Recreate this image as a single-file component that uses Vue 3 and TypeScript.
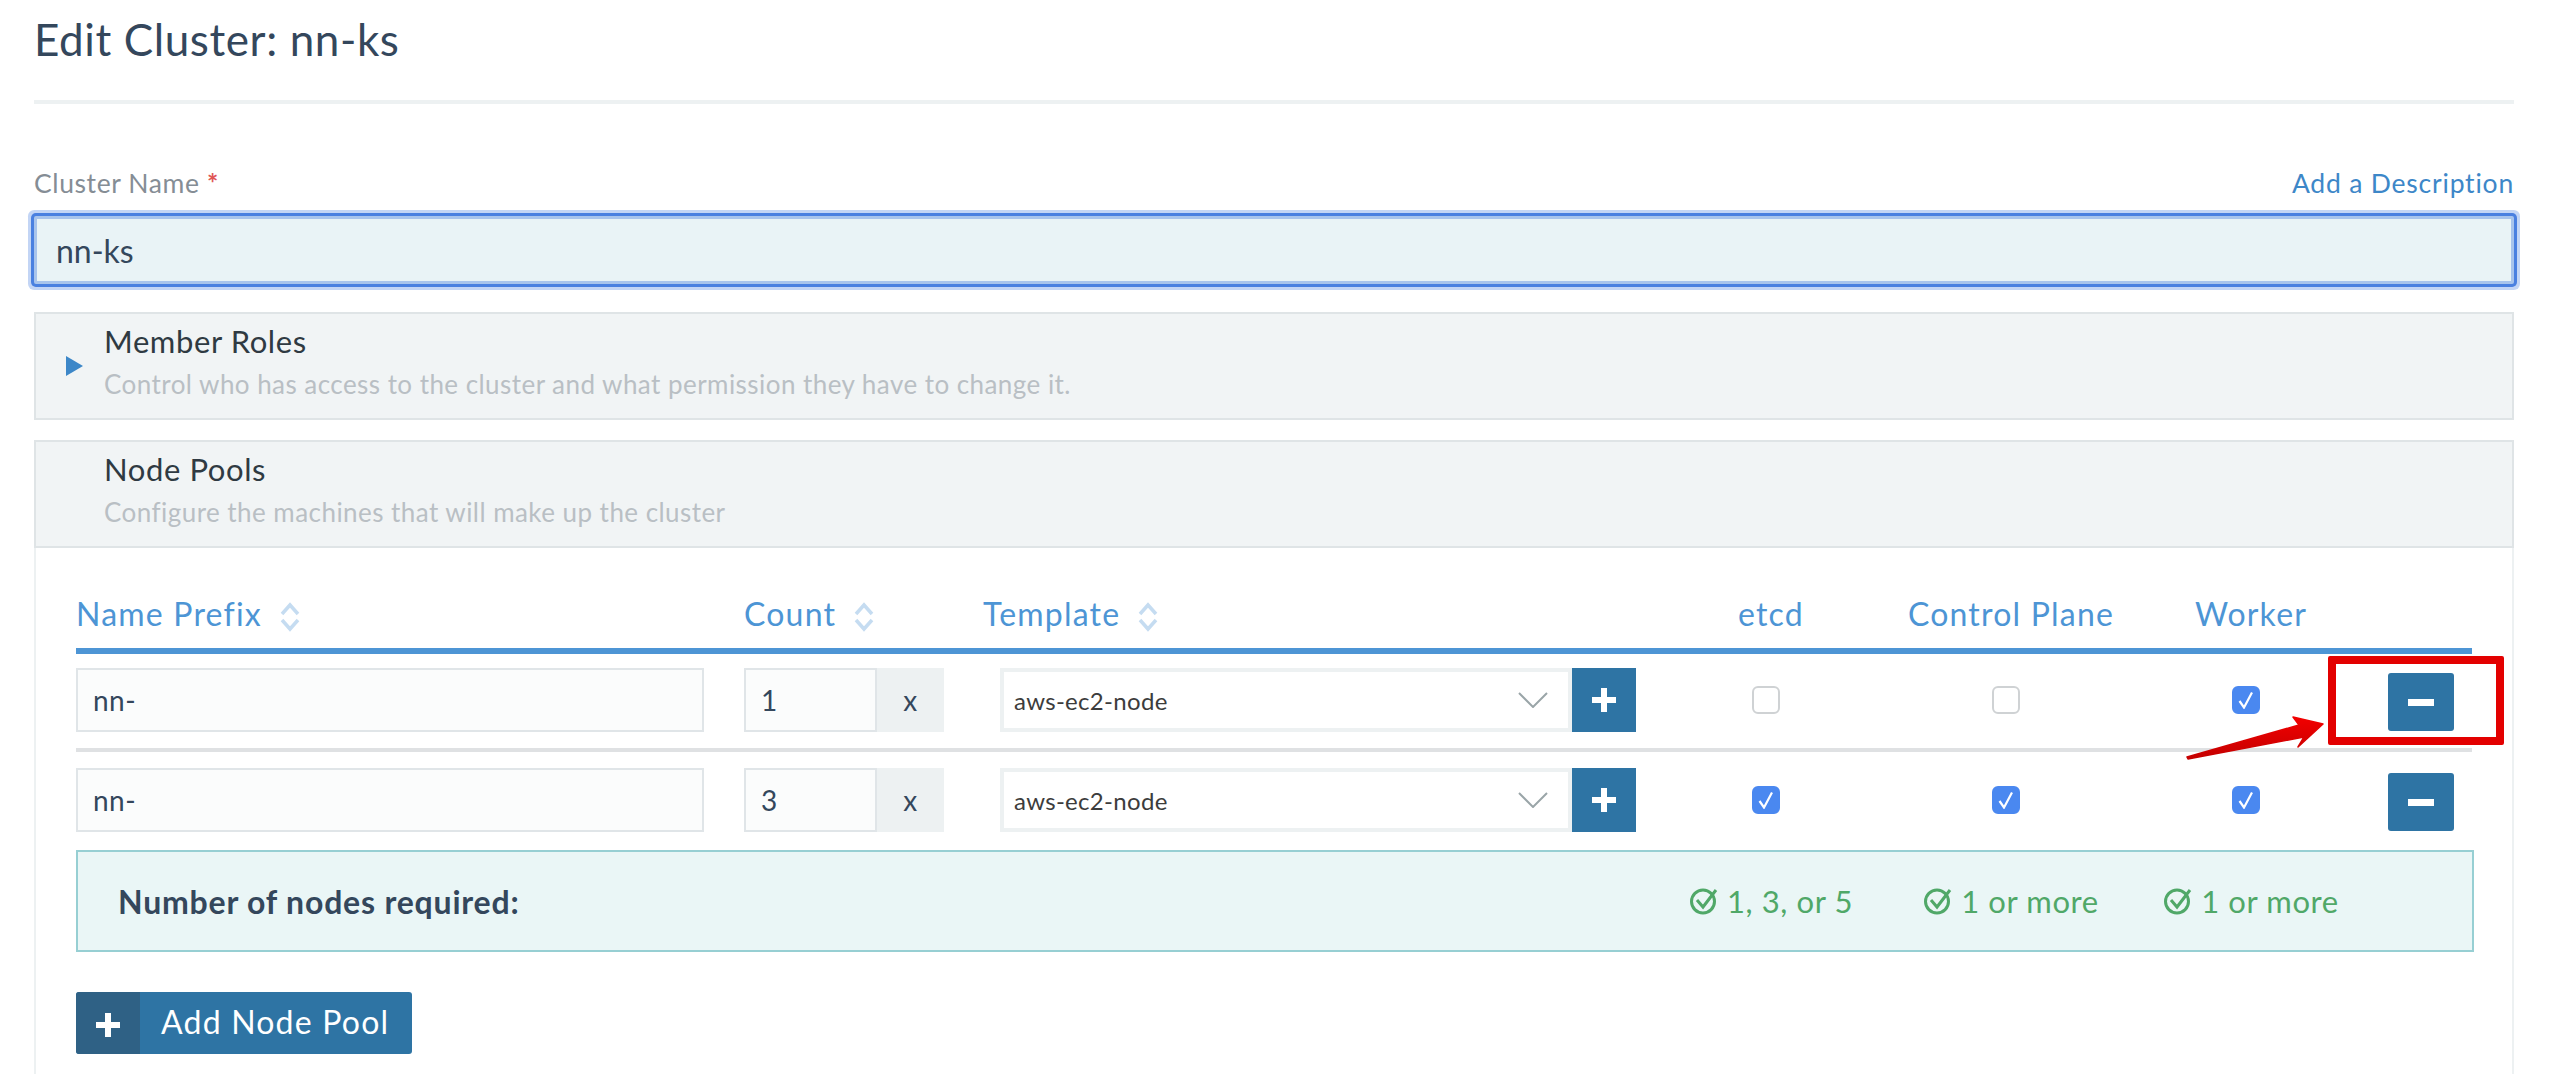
<template>
  <div class="page">
    <h1 class="title">Edit Cluster: nn-ks</h1>
    <div class="label-row">
      <label class="label">Cluster Name <span class="req">*</span></label>
      <a class="link">Add a Description</a>
    </div>
    <input class="name-input" value="nn-ks" />

    <section class="panel closed">
      <svg class="tri" width="17" height="20" viewBox="0 0 17 20"><path d="M0 0L17 10L0 20Z" fill="#3d87c8" /></svg>
      <div class="panel-title">Member Roles</div>
      <div class="panel-sub">Control who has access to the cluster and what permission they have to change it.</div>
    </section>

    <section class="panel">
      <div class="panel-title">Node Pools</div>
      <div class="panel-sub">Configure the machines that will make up the cluster</div>
    </section>

    <div class="body">
      <div class="grid head">
        <div v-for="h in sortHeads" :key="h" class="th">
          {{ h }}
          <svg class="sort" width="20" height="30" viewBox="0 0 20 30" fill="none" stroke="#c5dcf1" stroke-width="3.5">
            <path d="M2 12L10 3L18 12" />
            <path d="M2 18L10 27L18 18" />
          </svg>
        </div>
        <div v-for="h in roleHeads" :key="h" class="th role">{{ h }}</div>
        <div></div>
      </div>

      <div v-for="(row, i) in rows" :key="i" class="grid row" :class="{ first: i === 0 }">
        <input class="text-input name" value="nn-" />
        <div class="count">
          <input class="text-input count-input" :value="row.count" />
          <span class="addon">x</span>
        </div>
        <div class="template">
          <div class="select">
            <span>aws-ec2-node</span>
            <svg width="30" height="16" viewBox="0 0 30 16" fill="none" stroke="#9aa5a8" stroke-width="2"><path d="M1 1L15 15L29 1" /></svg>
          </div>
          <button class="square">
            <svg width="24" height="24" viewBox="0 0 24 24"><path d="M9 0H15V9H24V15H15V24H9V15H0V9H9Z" fill="#fff" /></svg>
          </button>
        </div>
        <div v-for="(on, j) in row.roles" :key="j" class="cell">
          <span class="check" :class="{ on }">
            <svg v-if="on" width="18" height="18" viewBox="0 0 18 18" fill="none" stroke="#fff" stroke-width="2.200"><path d="M2.500 10L7 16.500L15 1.500" /></svg>
          </span>
        </div>
        <div class="cell action">
          <button class="minus"><i></i></button>
        </div>
      </div>

      <div class="required">
        <strong>Number of nodes required:</strong>
        <div v-for="r in required" :key="r.text + r.id" class="req-cell">
          <svg width="30" height="28" viewBox="0 0 30 28" fill="none" stroke="#50a868" stroke-width="3">
            <circle cx="14" cy="14.500" r="11.500" />
            <path d="M8 13L14 20L27 3" />
          </svg>
          {{ r.text }}
        </div>
      </div>

      <button class="add"><span class="add-icon"><svg width="24" height="24" viewBox="0 0 24 24"><path d="M9 0H15V9H24V15H15V24H9V15H0V9H9Z" fill="#fff" /></svg></span><span class="add-text">Add Node Pool</span></button>
    </div>

    <!-- annotation drawn over the screenshot -->
    <div class="mark"></div>
    <svg class="arrow" width="150" height="50" viewBox="0 0 150 50">
      <defs>
        <linearGradient id="arrowFill" x1="0" y1="0" x2="0" y2="1">
          <stop offset="0" stop-color="#f20000" />
          <stop offset="1" stop-color="#c40000" />
        </linearGradient>
      </defs>
      <path d="M1 43L113 11L107 3L137 10L112 33L118 23L2 45Z" fill="url(#arrowFill)" stroke="url(#arrowFill)" stroke-width="1.500" stroke-linejoin="round" />
    </svg>
  </div>
</template>

<script setup lang="ts">
const sortHeads = ["Name Prefix", "Count", "Template"];
const roleHeads = ["etcd", "Control Plane", "Worker"];

const rows = [
  { count: 1, roles: [false, false, true] },
  { count: 3, roles: [true, true, true] },
];

const required = [
  { id: 1, text: "1, 3, or 5" },
  { id: 2, text: "1 or more" },
  { id: 3, text: "1 or more" },
];
</script>

<style>
html,
body {
  background: #fff;
}
</style>

<style scoped>
.page {
  position: relative;
  height: 1074px;
  overflow: hidden;
  box-sizing: border-box;
  padding: 0 48px 0 34px;
  font-family: Lato, "Open Sans", sans-serif;
  font-weight: 300;
  color: #34475c;
  letter-spacing: 0.6px;
}
.title {
  margin: 0;
  height: 100px;
  line-height: 78px;
  font-size: 44px;
  font-weight: 400;
  border-bottom: 4px solid #edf1f2;
}
.label-row {
  display: flex;
  justify-content: space-between;
  align-items: center;
  height: 34px;
  margin-top: 62px;
  font-size: 26.500px;
  font-weight: 400;
}
.label {
  color: #858d95;
}
.req {
  color: #e05555;
  font-weight: 700;
}
.link {
  color: #3d87c8;
  letter-spacing: 0.800px;
}
.name-input {
  display: block;
  box-sizing: border-box;
  width: 100%;
  height: 68px;
  margin-top: 16px;
  padding: 0 19px;
  background: #e9f3f6;
  border: 3px solid #a8c4ec;
  border-radius: 2px;
  box-shadow: 0 0 0 3px #4a80e0, 0 0 0 6px #c3d5f5;
  outline: none;
  font: 400 32px Lato, sans-serif;
  color: #34475c;
}
.panel {
  position: relative;
  box-sizing: border-box;
  height: 108px;
  margin-top: 28px;
  padding: 7px 0 0 68px;
  background: #f1f4f5;
  border: 2px solid #dfe4e6;
}
.panel + .panel {
  margin-top: 20px;
}
.panel-title {
  font-size: 31px;
  font-weight: 400;
  line-height: 40px;
  color: #2f3a42;
}
.panel-sub {
  margin-top: 6px;
  font-size: 26px;
  font-weight: 400;
  line-height: 34px;
  letter-spacing: 0.450px;
  color: #b9bfc4;
}
.tri {
  position: absolute;
  left: 30px;
  top: 42px;
}
.body {
  box-sizing: border-box;
  height: 530px;
  padding: 12px 40px 0;
  border-left: 2px solid #edf1f2;
  border-right: 2px solid #edf1f2;
}
.grid {
  display: grid;
  grid-template-columns: 668px 239px 663px 240px 240px 240px 1fr;
}
.head {
  height: 94px;
  border-bottom: 6px solid #4d95d5;
  box-sizing: border-box;
  padding-top: 33px;
  color: #4d95d5;
  font-size: 32px;
  font-weight: 400;
  letter-spacing: 1.200px;
}
.th {
  display: flex;
  align-items: center;
  gap: 18px;
  height: 40px;
}
.role {
  justify-content: center;
  padding-left: 10px;
}
.sort {
  margin-top: 8px;
}
.row {
  height: 80px;
  padding-top: 16px;
  box-sizing: border-box;
}
.row.first {
  height: 98px;
  padding-top: 14px;
  border-bottom: 4px solid #dfe1e3;
}
.text-input {
  box-sizing: border-box;
  width: 100%;
  height: 64px;
  padding: 0 15px;
  background: #fbfcfc;
  border: 2px solid #e0e5e8;
  outline: none;
  font: 400 28px Lato, sans-serif;
  letter-spacing: 0.500px;
  color: #34475c;
}
.text-input.name {
  width: 628px;
}
.count {
  display: flex;
  width: 200px;
  height: 64px;
}
.count-input {
  width: 133px;
}
.addon {
  flex: 1;
  display: flex;
  align-items: center;
  justify-content: center;
  background: #edf1f2;
  font-size: 28px;
  font-weight: 400;
}
.template {
  display: flex;
  margin: 0 10px 0 17px;
}
.select {
  box-sizing: border-box;
  flex: 1;
  height: 64px;
  display: flex;
  align-items: center;
  justify-content: space-between;
  padding: 0 20px 0 10px;
  background: #fff;
  border: 4px solid #edf1f2;
  font-size: 24px;
  font-weight: 400;
  color: #3c3c3c;
  letter-spacing: 0.300px;
}
.square {
  width: 64px;
  height: 64px;
  padding: 0;
  display: flex;
  align-items: center;
  justify-content: center;
  background: #2e74a4;
  border: 0;
}
.cell {
  display: flex;
  align-items: center;
  justify-content: center;
  height: 64px;
}
.check {
  box-sizing: border-box;
  width: 28px;
  height: 28px;
  display: flex;
  align-items: center;
  justify-content: center;
  border-radius: 6px;
  background: #fff;
  border: 2px solid #cfd2d4;
}
.check.on {
  background: #4a88f0;
  border-color: #4a88f0;
}
.action {
  justify-content: flex-start;
  padding-left: 22px;
}
.minus {
  width: 66px;
  height: 58px;
  margin-top: 4px;
  padding: 0;
  display: flex;
  align-items: center;
  justify-content: center;
  background: #2e74a4;
  border: 0;
  border-radius: 3px;
}
.minus i {
  display: block;
  width: 26px;
  height: 7px;
  background: #fff;
}
.required {
  box-sizing: border-box;
  display: grid;
  grid-template-columns: 1533px 240px 240px 240px;
  align-items: center;
  width: 2398px;
  height: 102px;
  margin-top: 18px;
  padding-left: 40px;
  background: #eaf6f6;
  border: 2px solid #97cfd3;
  font-size: 31px;
  font-weight: 400;
  color: #50a868;
}
.required strong {
  font-weight: 700;
  font-size: 32px;
  letter-spacing: 0.800px;
  color: #34475c;
}
.req-cell {
  display: flex;
  align-items: center;
  justify-content: center;
  gap: 8px;
  white-space: nowrap;
}
.add {
  display: flex;
  width: 336px;
  height: 62px;
  margin-top: 40px;
  padding: 0;
  background: #2e74a4;
  border: 0;
  border-radius: 3px;
  overflow: hidden;
  color: #fff;
  font: 400 32px Lato, sans-serif;
  letter-spacing: 1.200px;
}
.add-icon {
  width: 64px;
  height: 100%;
  padding-top: 3px;
  box-sizing: border-box;
  display: flex;
  align-items: center;
  justify-content: center;
  background: #2f6185;
}
.add-text {
  line-height: 60px;
  padding-left: 21px;
}
.mark {
  position: absolute;
  left: 2328px;
  top: 656px;
  width: 176px;
  height: 89px;
  box-sizing: border-box;
  border: 8px solid #e30000;
  border-radius: 2px;
}
.arrow {
  position: absolute;
  left: 2186px;
  top: 714px;
}
</style>
